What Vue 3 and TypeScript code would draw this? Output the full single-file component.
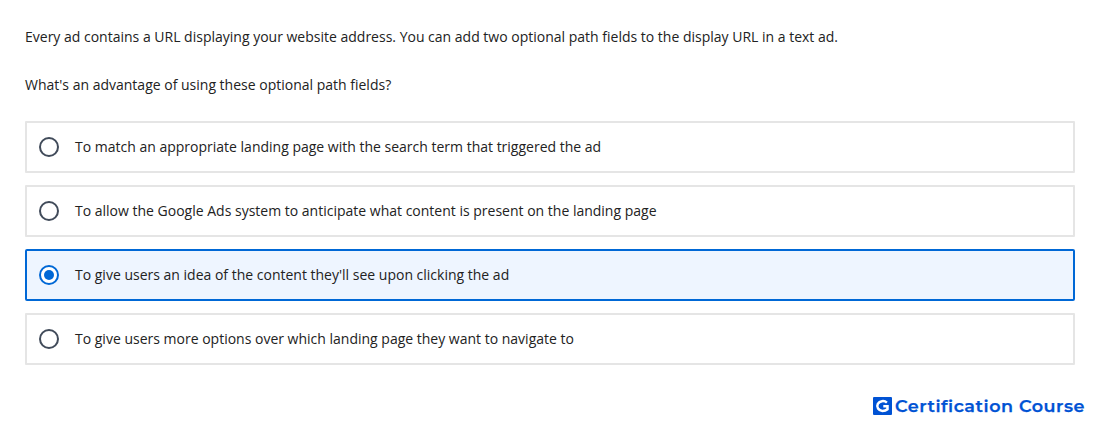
<script setup lang="ts">
import { ref } from 'vue'

const options: string[] = [
  'To match an appropriate landing page with the search term that triggered the ad',
  'To allow the Google Ads system to anticipate what content is present on the landing page',
  "To give users an idea of the content they'll see upon clicking the ad",
  'To give users more options over which landing page they want to navigate to',
]
const selected = ref(2)
</script>

<template>
  <main class="quiz">
    <p class="text">Every ad contains a URL displaying your website address. You can add two optional path fields to the display URL in a text ad.</p>
    <p class="text">What's an advantage of using these optional path fields?</p>
    <div class="options" role="radiogroup">
      <div
        v-for="(option, i) in options"
        :key="i"
        class="option"
        :class="{ selected: selected === i }"
        role="radio"
        :aria-checked="selected === i"
        @click="selected = i"
      >
        <span class="radio"></span>
        <span class="label">{{ option }}</span>
      </div>
    </div>
    <footer class="brand">
      <svg class="logo" viewBox="0 0 19 18" width="19" height="18">
        <rect width="19" height="18" rx="1" fill="#0052d4" />
        <path d="M13.9 5.6A5.6 4.9 0 1 0 9.4 13.9Q12.6 13.9 14.5 12.2V9.3H10.3" fill="none" stroke="#fff" stroke-width="2.5" />
      </svg>
      <svg class="wordmark" width="190" height="24">
        <text x="0" y="18" textLength="190" lengthAdjust="spacingAndGlyphs">Certification Course</text>
      </svg>
    </footer>
  </main>
</template>

<style>
body {
  background: #fff;
}
</style>

<style scoped>
.quiz {
  box-sizing: border-box;
  height: 425px;
  padding: 25px 25px 0;
  font-family: "Open Sans", sans-serif;
  font-size: 14px;
  line-height: 24px;
  color: #222;
}
.text {
  margin: 0 0 24px;
}
.options {
  display: flex;
  flex-direction: column;
  gap: 12px;
}
.option {
  box-sizing: border-box;
  height: 52px;
  border: 2px solid #e5e5e5;
  border-radius: 1px;
  padding: 0 12px;
  display: flex;
  align-items: center;
  gap: 16px;
}
.option.selected {
  border-color: #0068d6;
  border-radius: 2px;
  background: #eef5ff;
}
.radio {
  box-sizing: border-box;
  width: 20px;
  height: 20px;
  border: 2px solid #414b5a;
  border-radius: 50%;
  background: #fff;
  display: grid;
  place-items: center;
}
.selected .radio {
  border-color: #0068d6;
}
.selected .radio::after {
  content: "";
  width: 10px;
  height: 10px;
  border-radius: 50%;
  background: #0068d6;
}
.brand {
  display: flex;
  align-items: center;
  justify-content: flex-end;
  gap: 3px;
  margin: 29px -10px 0 0;
}
.wordmark {
  overflow: visible;
}
.wordmark text {
  font: 600 16.5px Montserrat, "Open Sans", sans-serif;
  letter-spacing: 0.5px;
  fill: #0052d4;
  stroke: #0052d4;
  stroke-width: 0.25px;
}
</style>
